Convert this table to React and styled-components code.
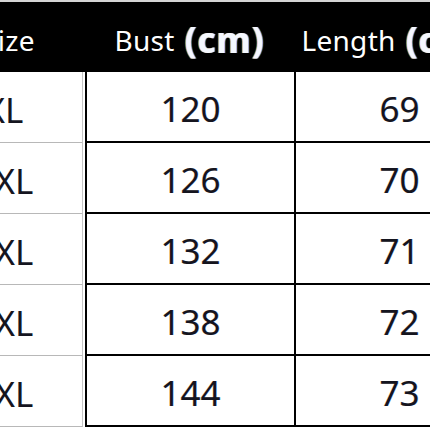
import React from 'react';
import styled, { createGlobalStyle } from 'styled-components';

const GlobalStyle = createGlobalStyle`
  html, body {
    margin: 0;
    padding: 0;
    background: #ffffff;
  }
  #root {
    width: 430px;
    height: 430px;
    overflow: hidden;
  }
`;

const Frame = styled.div`
  width: 430px;
  height: 430px;
  overflow: hidden;
  background: #ffffff;
  border-top: 2px solid #d4d4d4;
  box-sizing: border-box;
  font-family: 'Noto Sans', 'Open Sans', sans-serif;
`;

const Table = styled.div`
  display: grid;
  grid-template-columns: 161px 209px 209px;
  grid-auto-rows: 71px;
  grid-template-rows: 70px;
  margin-left: -76px;
  width: 579px;
`;

// $shift moves the centred label sideways (positive: right, negative: left)
const HeadCell = styled.div`
  background: #000000;
  color: #ffffff;
  display: flex;
  align-items: center;
  justify-content: center;
  padding-top: 5px;
  padding-left: ${p => Math.max(p.$shift || 0, 0)}px;
  padding-right: ${p => Math.max(-(p.$shift || 0), 0)}px;
  font-size: 28px;
  letter-spacing: 0.3px;
  white-space: nowrap;
`;

const Unit = styled.span`
  font-weight: 700;
  font-size: 35px;
  letter-spacing: 1px;
  margin-left: 10px;
  color: #f4f8ff;
  text-shadow: -1px 0 #e0a040, 1px 0 #3d8ee6;
`;

const SizeCell = styled.div`
  display: flex;
  align-items: center;
  justify-content: center;
  font-size: 35px;
  color: #15151f;
  margin-right: 2px;
  border-right: 1px solid #c6c6c6;
  border-bottom: 1px solid #b8b8b8;
  padding-top: 4px;
  padding-left: 2px;
`;

const ValueCell = styled.div`
  display: flex;
  align-items: center;
  justify-content: center;
  font-size: 35px;
  color: #15151f;
  border-left: 2px solid #000000;
  border-bottom: 2px solid #000000;
  padding-top: 4px;
  text-shadow: -0.5px 0 rgba(200, 140, 40, 0.35), 0.5px 0 rgba(40, 110, 220, 0.35);
`;

const rows = [
  { size: 'XL', bust: 120, length: 69 },
  { size: '2XL', bust: 126, length: 70 },
  { size: '3XL', bust: 132, length: 71 },
  { size: '4XL', bust: 138, length: 72 },
  { size: '5XL', bust: 144, length: 73 },
];

export default function App() {
  return (
    <>
      <GlobalStyle />
      <Frame>
        <Table>
          <HeadCell $shift={8}>Size</HeadCell>
          <HeadCell>
            Bust<Unit>(cm)</Unit>
          </HeadCell>
          <HeadCell $shift={-10}>
            Length<Unit>(cm)</Unit>
          </HeadCell>
          {rows.map(row => (
            <React.Fragment key={row.size}>
              <SizeCell>{row.size}</SizeCell>
              <ValueCell>{row.bust}</ValueCell>
              <ValueCell>{row.length}</ValueCell>
            </React.Fragment>
          ))}
        </Table>
      </Frame>
    </>
  );
}
